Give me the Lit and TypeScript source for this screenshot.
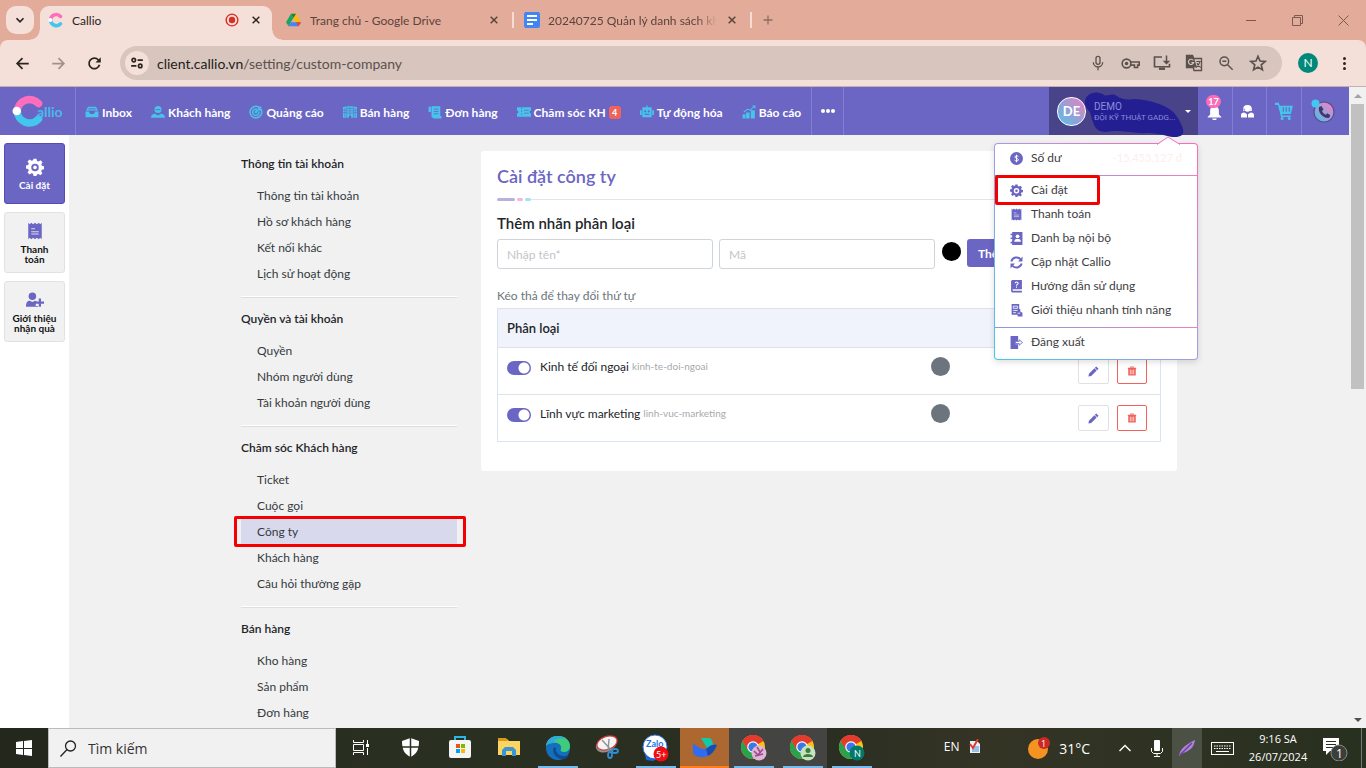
import { LitElement, html, svg, css, nothing } from 'lit';
import { customElement } from 'lit/decorators.js';
import { classMap } from 'lit/directives/class-map.js';

const icon = (body: unknown, size = 14, box = 24) =>
  html`<svg width=${size} height=${size} viewBox="0 0 ${box} ${box}" fill="currentColor" aria-hidden="true">${body}</svg>`;

const I = {
  chevron: svg`<path d="M6 9l6 6 6-6" fill="none" stroke="currentColor" stroke-width="3"/>`,
  close: svg`<path d="M4 4l16 16M20 4L4 20" fill="none" stroke="currentColor" stroke-width="3.6"/>`,
  plus: svg`<path d="M12 3v18M3 12h18" fill="none" stroke="currentColor" stroke-width="2.6"/>`,
  back: svg`<path d="M22 12H4M12 3.500L3.500 12l8.500 8.500" fill="none" stroke="currentColor" stroke-width="2.800"/>`,
  forward: svg`<path d="M2 12h18M12 3.500l8.500 8.500-8.500 8.500" fill="none" stroke="currentColor" stroke-width="2.800"/>`,
  reload: svg`<path d="M20 14a8.500 8.500 0 1 1-2-8l3 3" fill="none" stroke="currentColor" stroke-width="2.800"/><path d="M22 2v8.500h-8.500z"/>`,
  site: svg`<g fill="none" stroke="currentColor" stroke-width="2.800"><circle cx="6.500" cy="7" r="3"/><path d="M13 7h9M2 17h9"/><circle cx="17.500" cy="17" r="3"/></g>`,
  mic: svg`<g fill="none" stroke="currentColor" stroke-width="2"><rect x="9" y="2" width="6" height="12" rx="3"/><path d="M5 11a7 7 0 0 0 14 0M12 18v5"/></g>`,
  key: svg`<g fill="none" stroke="currentColor" stroke-width="2"><circle cx="7" cy="12" r="5.500"/><path d="M12 10h11v4h-2v3h-4v-3h-5"/></g><circle cx="7" cy="12" r="2.200"/>`,
  install: svg`<path d="M12 4H2v13h20v-4M8 20h8" fill="none" stroke="currentColor" stroke-width="2.200"/><path d="M17 2h2v7h4l-5 5-5-5h4zM8 18h8v3H8z"/>`,
  translate: svg`<path d="M2 2h8l1 4h11v16H12l-1-4H2z" fill="none" stroke="currentColor" stroke-width="1.800"/><path d="M2 2h9l5 16H2z"/><path d="M11 8.500a3.500 3.500 0 1 0 .5 3H8.500" fill="none" stroke="#d7c5be" stroke-width="1.500"/><path d="M15 10h6M18 9v1M20 10c-1 4-3 6-5 8M16 12c1 3 3 5 5 6" fill="none" stroke="currentColor" stroke-width="1.400"/>`,
  zoomOut: svg`<g fill="none" stroke="currentColor" stroke-width="2.200"><circle cx="9.500" cy="9.500" r="6.500"/><path d="M14.500 14.500L22 22M6.500 9.500h6"/></g>`,
  star: svg`<path d="M12 3l2.700 6.300 6.800.6-5.200 4.500 1.600 6.600-5.900-3.500L6.100 21l1.600-6.600L2.500 9.900l6.800-.6z" fill="none" stroke="currentColor" stroke-width="2.200"/>`,
  dots: svg`<circle cx="12" cy="4" r="2.400"/><circle cx="12" cy="12" r="2.400"/><circle cx="12" cy="20" r="2.400"/>`,
  rec: svg`<circle cx="12" cy="12" r="10" fill="none" stroke="currentColor" stroke-width="2.400"/><circle cx="12" cy="12" r="5.500"/>`,
  inbox: svg`<path d="M5 3h14l3 7H2zM1 11h6c0 3 2 4.500 5 4.500s5-1.500 5-4.500h6v10H1z"/><path d="M6 6h12M5 8.500h14" stroke="#6b65c4" stroke-width="1"/>`,
  customer: svg`<circle cx="12" cy="7.500" r="6"/><path d="M0 22c0-5 3-7 7-7l5 3 5-3c4 0 7 2 7 7z"/><path d="M8 8h8" stroke="#6b65c4" stroke-width="1.500"/>`,
  target: svg`<g fill="none" stroke="currentColor" stroke-width="2.600"><path d="M17 3.500a10 10 0 1 0 4 4.500"/><path d="M14 7.500a5.500 5.500 0 1 0 3 3.500"/></g><circle cx="12" cy="12" r="2.400"/><path d="M12 12l9-9" stroke="currentColor" stroke-width="2.400"/><path d="M18 2l1 4 4 1-3 3-4-1-1-4z"/>`,
  shop: svg`<path d="M0 4l6-2v20H0zM7 2h10v20h-3v-4h-4v4H7zM18 2l6 2v18h-6z"/><path d="M7 6h10M7 10h10M7 14h10M0 9h6M0 13h6M18 9h6M18 13h6" stroke="#6b65c4" stroke-width="1"/><path d="M12 3v14M3 5v16M21 5v16" stroke="#6b65c4"/>`,
  order: svg`<path d="M1 3h4v9H1zM6 2h15v17h2v4H10l-4-3z"/><path d="M10 7h8M10 11h8M10 15h8" stroke="#6b65c4" stroke-width="1.500"/>`,
  ticket: svg`<path d="M0 4h24v5l-3 3 3 3v5H0v-5l3-3-3-3z"/><path d="M8 4v3M8 9v3M8 14v3M12 9h8M12 14h8" stroke="#6b65c4" stroke-width="1.300"/>`,
  robot: svg`<path d="M11 1h2v3h7v17H4V4h7zM0 9h3v8H0zM21 9h3v8h-3z"/><g fill="#6b65c4"><circle cx="9" cy="11" r="1.800"/><circle cx="15" cy="11" r="1.800"/><path d="M8 15h8v2H8z"/></g>`,
  report: svg`<path d="M1 16h5v7H1zM7 13h6v10H7zM15 9h7v14h-7z"/><path d="M3 12l7-5 4 2 6-6" fill="none" stroke="currentColor" stroke-width="1.800"/><path d="M17 1h6v6z"/>`,
  gear: svg`<path fill-rule="evenodd" d="M10 1h4l.7 3 2 .8L19.400 3l2.700 2.800-1.700 2.600.8 2 2.800.6v4l-3 .6-.8 2 1.700 2.700-2.700 2.700-2.700-1.700-1.900.8L13.900 24h-3.800l-.7-2.900-2-.8L4.700 22 2 19.200l1.700-2.600-.8-2L0 14v-4l2.900-.6.8-2L2 4.700 4.800 2l2.600 1.700 2-.8zM12 7.500a5 5 0 1 0 0 10 5 5 0 0 0 0-10z"/><circle cx="12" cy="12.500" r="2.400"/>`,
  receipt: svg`<path d="M3 1l2 2 2-2 2.500 2L12 1l2.500 2L17 1l2 2 2-2v22l-2-2-2 2-2.500-2-2.500 2-2.500-2L7 23l-2-2-2 2z"/><path d="M7 9h5M7 13h10M7 16h10" stroke="#fff" stroke-width="1"/>`,
  userPlus: svg`<circle cx="8.500" cy="7" r="5"/><path d="M0 21c0-6 2-8 5-8l3.500 1.500L12 13l2 .5V16h-1v4h3v1zM17 10h3v4h4v3h-4v4h-3v-4h-4v-3h4z"/>`,
  money: svg`<circle cx="12" cy="12" r="12"/><path d="M15.500 8.500C14 6.500 8.800 7 9 9.500s6.500 2 6.500 4.800-5 3-7 .7M12 5v14" fill="none" stroke="#fff" stroke-width="1.800"/>`,
  contacts: svg`<path d="M4 0h19v24H4v-3H1v-3h3v-5H1v-3h3V6H1V3h3z"/><g fill="#fff"><circle cx="14" cy="8" r="3.500"/><path d="M8 18c0-4 2-5 6-5s6 1 6 5z"/></g>`,
  sync: svg`<g fill="none" stroke="currentColor" stroke-width="3.600"><path d="M2.500 10A10 10 0 0 1 20 6.500"/><path d="M21.500 14A10 10 0 0 1 4 17.500"/></g><path d="M23 1v9h-8zM1 23v-9h8z"/>`,
  book: svg`<path d="M4 0h18v17H5v3h17v3H4l-2-2V2z"/><path d="M9.500 6c0-3 5.500-3 5.500 0 0 2-3 2-3 4.500M12 12v2.200" fill="none" stroke="#fff" stroke-width="1.900"/>`,
  guide: svg`<path d="M3 0h14v9h2v5l4 2v7h-9v-3H3z"/><path d="M6 4h8v4H6zM6 12h8M6 16h5" fill="none" stroke="#fff" stroke-width="1.500"/><path d="M14 17h5" stroke="#fff" stroke-width="1.500"/>`,
  logout: svg`<path d="M1 0h14v9h-5v6h5v9H1z"/><path d="M10 10h7V7l6 5-6 5v-3h-7z" fill="#fff" stroke="currentColor" stroke-width="1.600"/>`,
  bell: svg`<path d="M12 0c1.500 0 2 1 2 2 4 1 5 4 5 8v5l4 4v1H1v-1l4-4v-5c0-4 1-7 5-8 0-1 .5-2 2-2zM8.500 21.500h7a3.500 3 0 0 1-7 0z"/>`,
  agent: svg`<circle cx="12" cy="7" r="5.500"/><path d="M4 7a8 7 0 0 1 16 0v4h-3V7M4 7v4h3M0 23v-4c0-3 2-5 6-5l5 3v6zM24 23v-4c0-3-2-5-6-5l-5 3v6z"/>`,
  cart: svg`<path d="M0 1h5l1.500 4H24l-3 11H9l1 2h11v2H8L4 4H0z"/><circle cx="9.500" cy="22" r="2"/><circle cx="19" cy="22" r="2"/><path d="M11 7v6M15 7v6M19 7v6" stroke="#6b65c4" stroke-width="1.500"/>`,
  pencil: svg`<path d="M18 1l5 5-3 3-5-5zM14 5l5 5L7 22l-6 1 1-6z"/>`,
  trash: svg`<path d="M8 4V1h8v3h6v3h-1v16H3V7H2V4h6zM10 4h4V3h-4z"/><path d="M8 9v11M12 9v11M16 9v11" stroke="#fff" stroke-width="1.600"/>`,
};

const callioMark = (s: number) => html`<svg width=${s} height=${s} viewBox="0 0 32 32" fill="none" aria-hidden="true">
  <path d="M25 9A11.500 11.500 0 0 0 5 16" stroke="#ff6ebd" stroke-width="7" stroke-linecap="round"/>
  <path d="M5 16a11.500 11.500 0 0 0 20 7.500" stroke="#43c7ee" stroke-width="7" stroke-linecap="round"/>
  <circle cx="4.500" cy="16" r="4" fill="#fff"/></svg>`;

const driveMark = html`<svg width="15" height="14" viewBox="0 0 30 27" aria-hidden="true">
  <path d="M10 1h10l10 17H20z" fill="#fbbc04"/><path d="M10 1L0 18l5 8 10-17z" fill="#1ea362"/><path d="M5 26h20l5-8H10z" fill="#4285f4"/><path d="M25 26l5-8H20z" fill="#ea4335"/><path d="M10 1h10l-5 8z" fill="#188038"/></svg>`;

const docsMark = html`<svg width="16" height="16" viewBox="0 0 16 16" aria-hidden="true"><rect width="16" height="16" rx="2" fill="#4285f4"/><path d="M3 4h10M3 8h10M3 12h6" stroke="#fff" stroke-width="2"/></svg>`;

const chromeMark = (badge: unknown) => html`<svg width="28" height="28" viewBox="0 0 28 28" aria-hidden="true">
  <circle cx="13" cy="13" r="12" fill="#fbc116"/><path d="M13 13L2.600 7A12 12 0 0 1 23.400 7z" fill="#e33b2e"/><path d="M2.600 7A12 12 0 0 0 13 25l4.500-9L8 15z" fill="#2aa24c"/><path d="M13 7h10.400A12 12 0 0 0 2.600 7l5.200 9z" fill="#e33b2e"/>
  <circle cx="13" cy="13" r="5.800" fill="#fff"/><circle cx="13" cy="13" r="4.600" fill="#3b78e7"/>${badge}</svg>`;

const navItems = [
  { label: 'Inbox', icon: I.inbox }, { label: 'Khách hàng', icon: I.customer }, { label: 'Quảng cáo', icon: I.target },
  { label: 'Bán hàng', icon: I.shop }, { label: 'Đơn hàng', icon: I.order }, { label: 'Chăm sóc KH', icon: I.ticket, badge: 4 },
  { label: 'Tự động hóa', icon: I.robot }, { label: 'Báo cáo', icon: I.report },
];

const sections = [
  { title: 'Thông tin tài khoản', items: ['Thông tin tài khoản', 'Hồ sơ khách hàng', 'Kết nối khác', 'Lịch sử hoạt động'] },
  { title: 'Quyền và tài khoản', items: ['Quyền', 'Nhóm người dùng', 'Tài khoản người dùng'] },
  { title: 'Chăm sóc Khách hàng', items: ['Ticket', 'Cuộc gọi', 'Công ty', 'Khách hàng', 'Câu hỏi thường gặp'] },
  { title: 'Bán hàng', items: ['Kho hàng', 'Sản phẩm', 'Đơn hàng'] },
];

@customElement('browser-chrome')
class BrowserChrome extends LitElement {
  static styles = css`
    :host { display: block; font-family: Lato, sans-serif; background: #e3ab9a; color: #2b2422; }
    button { border: 0; background: none; padding: 0; color: inherit; font: inherit; display: grid; place-items: center; }
    svg { display: block; flex: none; }
    .tabs { display: flex; height: 40px; align-items: center; padding-left: 6px; }
    .search { width: 28px; height: 28px; border-radius: 10px; background: #f5e0d9; margin-right: 4px; }
    .tab { width: 238px; height: 28px; box-sizing: border-box; display: flex; align-items: center; gap: 7px; padding: 0 12px 0 10px; font-size: 12px; color: #5b443d; }
    .tab + .tab { border-right: 2px solid #f3dcd4; padding-right: 10px; height: 16px; }
    .tab .mark { width: 17px; }
    .tab.active { position: relative; width: 232px; height: 34px; margin: 6px 4px 0 2px; padding: 0 8px; background: #f5e0d9; border-radius: 9px 9px 0 0; color: #2b2422; }
    .tab.active > * { margin-bottom: 6px; }
    .tab.active::before, .tab.active::after { content: ''; position: absolute; bottom: 0; width: 10px; height: 10px; }
    .tab.active::before { right: 100%; background: radial-gradient(circle at 0 0, transparent 9px, #f5e0d9 10px); }
    .tab.active::after { left: 100%; background: radial-gradient(circle at 100% 0, transparent 9px, #f5e0d9 10px); }
    .name { flex: 1; white-space: nowrap; overflow: hidden; }
    .fade { -webkit-mask-image: linear-gradient(90deg, #000 88%, transparent); mask-image: linear-gradient(90deg, #000 88%, transparent); }
    .rec { color: #d93025; margin-right: 2px; }
    .tab button { width: 16px; height: 16px; }
    .new { width: 32px; height: 28px; color: #8f6d62; }
    .win { margin-left: auto; display: flex; color: #7c5a50; }
    .win button { width: 46px; height: 40px; }
    .bar { display: flex; align-items: center; height: 46px; padding: 0 4px; background: #f5e0d9; border-radius: 8px 8px 0 0; border-bottom: 1px solid #c3b1ab; }
    .bar > button { width: 36px; height: 34px; }
    .dim { color: #a58f88; }
    .omni { flex: 1; min-width: 0; height: 34px; margin: 0 8px; box-sizing: border-box; border-radius: 17px; background: #d7c5be; display: flex; align-items: center; padding: 0 8px 0 5px; color: #5b514e; }
    .omni button { width: 32px; height: 32px; }
    .omni .site { width: 24px; height: 24px; border-radius: 12px; background: #f5e0d9; color: #2b2422; }
    .url { flex: 1; font-size: 14px; margin-left: 8px; }
    .url b { font-weight: 400; color: #231d1b; }
    .me { width: 20px; height: 20px; border-radius: 10px; background: #00897b; color: #fff; font-size: 12px; line-height: 20px; text-align: center; }
  `;
  render() {
    const close = html`<button aria-label="Đóng thẻ">${icon(I.close, 10)}</button>`;
    return html`
      <div class="tabs">
        <button class="search" aria-label="Tìm thẻ">${icon(I.chevron, 14)}</button>
        <div class="tab active"><span class="mark">${callioMark(16)}</span><span class="name">Callio</span><span class="rec">${icon(I.rec, 14)}</span>${close}</div>
        <div class="tab"><span class="mark">${driveMark}</span><span class="name">Trang chủ - Google Drive</span>${close}</div>
        <div class="tab"><span class="mark">${docsMark}</span><span class="name fade">20240725 Quản lý danh sách kh</span>${close}</div>
        <button class="new" aria-label="Thẻ mới">${icon(I.plus, 12)}</button>
        <div class="win">
          <button aria-label="Thu nhỏ"><svg width="10" height="10"><path d="M0 5.500h10" stroke="currentColor"/></svg></button>
          <button aria-label="Khôi phục"><svg width="11" height="11" fill="none" stroke="currentColor"><path d="M.5 2.500h8v8h-8zM2.500 2V.5h8v8H9"/></svg></button>
          <button aria-label="Đóng"><svg width="11" height="11" stroke="currentColor"><path d="M.5.5l10 10M10.500.5l-10 10"/></svg></button>
        </div>
      </div>
      <div class="bar">
        <button aria-label="Quay lại">${icon(I.back, 15)}</button>
        <button class="dim" aria-label="Tiến">${icon(I.forward, 15)}</button>
        <button aria-label="Tải lại">${icon(I.reload, 15)}</button>
        <div class="omni">
          <button class="site" aria-label="Thông tin trang">${icon(I.site, 14)}</button>
          <span class="url"><b>client.callio.vn</b>/setting/custom-company</span>
          <button aria-label="Micrô">${icon(I.mic, 16)}</button>
          <button aria-label="Mật khẩu">${icon(I.key, 19)}</button>
          <button aria-label="Cài đặt ứng dụng">${icon(I.install, 18)}</button>
          <button aria-label="Dịch">${icon(I.translate, 18)}</button>
          <button aria-label="Thu phóng">${icon(I.zoomOut, 16)}</button>
          <button aria-label="Đánh dấu">${icon(I.star, 18)}</button>
        </div>
        <button aria-label="Hồ sơ"><span class="me">N</span></button>
        <button aria-label="Trình đơn">${icon(I.dots, 15)}</button>
      </div>`;
  }
}

@customElement('callio-header')
class CallioHeader extends LitElement {
  static styles = css`
    :host { display: flex; height: 48px; background: #6b65c4; color: #fff; font: 700 12px Lato, sans-serif; position: relative; z-index: 2; }
    svg { display: block; flex: none; }
    a { color: inherit; text-decoration: none; }
    button { border: 0; background: none; padding: 0; color: inherit; font: inherit; display: grid; place-items: center; }
    .logo { width: 75px; box-sizing: border-box; padding-left: 12px; display: flex; align-items: center; color: #4ab9ea; font-size: 14px; }
    .logo svg { margin-right: -9px; }
    nav { display: flex; border-left: 1px solid #837ed6; border-right: 1px solid #837ed6; }
    nav a { display: flex; align-items: center; gap: 3px; padding: 2px 10px 0 9px; white-space: nowrap; }
    nav svg { color: #47c4ec; width: 14px; }
    .count { background: #f0625a; border-radius: 3px; width: 12px; line-height: 13px; font-size: 9px; text-align: center; }
    .more { width: 32px; border-right: 1px solid #837ed6; }
    .right { margin-left: auto; display: flex; }
    .user { position: relative; width: 149px; background: #494389; }
    .who { width: 100%; height: 48px; display: flex; align-items: center; gap: 8px; padding: 0 7px 0 8px; box-sizing: border-box; text-align: left; }
    .avatar { width: 27px; height: 27px; border: 1px solid #fff; border-radius: 14px; background: linear-gradient(225deg, #f07fc0, #8fa2d8 55%, #55c4ea); line-height: 27px; text-align: center; font-size: 13px; }
    .names { font: 10px/12px Roboto, sans-serif; color: #8f8bdc; white-space: nowrap; z-index: 1; flex: 1; padding-top: 2px; }
    .names small { display: block; font-size: 8px; line-height: 10px; }
    .scribble { position: absolute; left: 35px; top: 3px; }
    .caret { border: 3px solid transparent; border-top-color: #fff; border-bottom: 0; }
    .tool { width: 34px; border-left: 1px solid #837ed6; box-sizing: border-box; position: relative; padding-right: 5px; }
    .tool.wide { width: 48px; }
    .tool.cart { color: #47c4ec; width: 35px; padding: 0; }
    .tool.bell { border: 0; padding-right: 2px; }
    .bell svg { margin-top: 2px; }
    .bell span { position: absolute; top: 8px; left: 8px; width: 15px; line-height: 13px; border-radius: 7px; background: #fb6cb9; font-size: 9px; text-align: center; }
    .drop { position: absolute; right: 0; top: 56px; width: 204px; box-sizing: border-box; border: 1px solid transparent; border-radius: 4px;
      background: linear-gradient(#fff, #fff) padding-box, linear-gradient(225deg, #fb6cb9, #a99be0 50%, #43c7ee) border-box;
      box-shadow: 0 2px 6px #0002; color: #3d3d42; font: 400 12px/24px Lato, sans-serif; padding: 2px 0 5px; }
    .arrow { position: absolute; right: 16px; top: -8px; }
    .drop a { display: flex; align-items: center; gap: 8px; padding: 0 15px; position: relative; }
    .drop svg { color: #6b65c4; }
    .drop a > span { margin-left: auto; color: #fdeeee; font-size: 11px; }
    .drop hr { height: 1px; border: 0; margin: 5px 0 2px; background: linear-gradient(90deg, #7f9ede, #f07fc0); }
    .marked::after { content: ''; position: absolute; left: 0; top: -3px; width: 99px; height: 24px; border: 3px solid #f40000; border-radius: 2px; }
  `;
  render() {
    const row = (ic: unknown, label: string, extra: unknown = nothing, mark = false) =>
      html`<a href="#" class=${classMap({ marked: mark })}>${icon(ic, 13)}${label}${extra}</a>`;
    return html`
      <a class="logo" href="#" aria-label="Callio">${callioMark(34)}<span>allio</span></a>
      <nav>${navItems.map(n => html`<a href="#">${icon(n.icon, 14)}<span>${n.label}</span>${n.badge ? html`<span class="count">${n.badge}</span>` : nothing}</a>`)}</nav>
      <button class="more" aria-label="Thêm mục"><svg width="14" height="4" fill="#fff"><circle cx="2" cy="2" r="2"/><circle cx="7" cy="2" r="2"/><circle cx="12" cy="2" r="2"/></svg></button>
      <div class="right">
        <div class="user">
          <button class="who">
            <span class="avatar">DE</span>
            <svg class="scribble" width="102" height="48" viewBox="0 0 102 48"><path d="M1 11C2 4 10 0 19 4c3 4 8-2 14 2 3 3 10 4 18 3 14 1 33 6 40 15 5 7 11 17 7 21-8 6-21-3-34-2-14 1-30-4-42-1C9 42 9 31 6 22 2 18 0 15 1 11z" fill="#231f93"/></svg>
            <span class="names">DEMO<small>ĐỘI KỸ THUẬT GADG...</small></span>
            <span class="caret"></span>
          </button>
          <div class="drop">
            <svg class="arrow" width="24" height="9" viewBox="0 0 24 9"><path d="M0 9L11 1l13 8z" fill="#fff"/><path d="M0 8.500L11 1l12 7.500" fill="none" stroke="#fb6cb9"/></svg>
            ${row(I.money, 'Số dư', html`<span>-15,453,127 đ</span>`)}
            <hr>
            ${row(I.gear, 'Cài đặt', nothing, true)}
            ${row(I.receipt, 'Thanh toán')}
            ${row(I.contacts, 'Danh bạ nội bộ')}
            ${row(I.sync, 'Cập nhật Callio')}
            ${row(I.book, 'Hướng dẫn sử dụng')}
            ${row(I.guide, 'Giới thiệu nhanh tính năng')}
            <hr>
            ${row(I.logout, 'Đăng xuất')}
          </div>
        </div>
        <button class="tool bell" aria-label="Thông báo">${icon(I.bell, 15)}<span>17</span></button>
        <button class="tool" aria-label="Tổng đài viên">${icon(I.agent, 13)}</button>
        <button class="tool cart" aria-label="Giỏ hàng">${icon(I.cart, 18)}</button>
        <button class="tool wide" aria-label="Gọi điện">
          <svg width="24" height="24" viewBox="0 0 24 24"><defs><linearGradient id="g" x1="1" y1="0" x2="0" y2="1"><stop offset=".15" stop-color="#e884c8"/><stop offset=".85" stop-color="#5bb9e4"/></linearGradient></defs><circle cx="13" cy="13" r="10" fill="url(#g)" stroke="#574f8f" stroke-width="1.200"/><path d="M8 8l2.500-1 2 3.500-1.500 1.500c.7 1.800 2 3 3.800 3.700l1.500-1.500 3 2-1 2.500c-5 1.500-12-5-10.300-10.700z" fill="#3f3770"/><circle cx="4.500" cy="4.500" r="4" fill="#43c7ee"/></svg>
        </button>
      </div>`;
  }
}

@customElement('settings-page')
class SettingsPage extends LitElement {
  static styles = css`
    :host { display: flex; min-height: 0; flex: 1; background: #f1f1f1; color: #212529; font: 12px Lato, sans-serif; overflow: hidden; }
    svg { display: block; }
    a { color: inherit; text-decoration: none; }
    .rail { width: 69px; box-sizing: border-box; flex: none; background: #fff; padding: 8px 4px; display: flex; flex-direction: column; gap: 8px; }
    .rail a { height: 61px; box-sizing: border-box; border: 1px solid #e2e2e2; border-radius: 3px; background: #f1f1f1; display: flex; flex-direction: column; align-items: center; justify-content: center; gap: 4px; font-weight: 700; font-size: 10px; line-height: 10px; text-align: center; color: #111; }
    .rail svg { color: #6b65c4; }
    .rail .on { background: #6b65c4; border-color: #544db4; color: #fff; }
    .rail .on svg { color: #fff; }
    .wrap { flex: 1; min-width: 0; padding: 16px; }
    .cols { display: flex; align-items: flex-start; gap: 24px; max-width: 936px; margin: 0 auto; }
    .menu { width: 216px; flex: none; line-height: 26px; }
    .menu h2 { margin: 0 0 6px; font-size: 12px; font-weight: 600; }
    .menu section { border-bottom: 1px solid #dedede; box-shadow: inset 0 -1px #fff; padding-bottom: 10px; margin-bottom: 8px; }
    .menu a { display: block; padding-left: 16px; color: #343a40; position: relative; }
    .menu .on { background: #d9d9ee; }
    .menu .on::after { content: ''; position: absolute; inset: -3px -9px -2px -7px; border: 3px solid #f40000; border-radius: 2px; }
    .panel { flex: 1; min-width: 0; background: #fff; border-radius: 3px; padding: 13px 16px 29px; }
    h1 { margin: 0; font-size: 18px; line-height: 24px; font-weight: 600; color: #6b65c4; }
    .rule { margin-top: 10px; height: 3px; display: flex; align-items: center; gap: 2px; }
    .rule i { height: 3px; width: 6px; border-radius: 2px; background: #f9b3dc; }
    .rule i:first-child { width: 18px; background: #b5b2e2; }
    .rule .c { background: #9fe3f5; margin-right: -2px; }
    .rule b { flex: 1; height: 1px; background: #e2e4e8; }
    h3 { margin: 11px 0 5px; font-size: 15px; line-height: 22px; font-weight: 600; }
    form { display: flex; gap: 6px; align-items: flex-start; }
    form input:not([type=color]) { flex: 0 1 216px; min-width: 0; height: 30px; box-sizing: border-box; border: 1px solid #ced4da; border-radius: 3px; padding: 0 9px; font: 12px Lato, sans-serif; }
    input::placeholder { color: #c4c4c8; }
    input[type=color] { appearance: none; width: 19px; height: 19px; padding: 0; border: 0; border-radius: 10px; background: #000; margin: 3px 0 0 1px; overflow: hidden; }
    input[type=color]::-webkit-color-swatch-wrapper { padding: 0; }
    input[type=color]::-webkit-color-swatch { border: 0; }
    .add { height: 28px; border: 0; border-radius: 3px; background: #6b65c4; color: #fff; font: 700 12px Lato, sans-serif; padding: 0 11px; }
    .hint { margin: 19px 0 4px; line-height: 16px; color: #6c757d; }
    table { width: 100%; border-collapse: collapse; border: 1px solid #dbe5f2; }
    tr { border-top: 1px solid #dee2e6; }
    th { text-align: left; background: #f0f3fb; font-size: 13px; font-weight: 600; line-height: 20px; padding: 9px; }
    td { vertical-align: top; padding: 9px; line-height: 19px; }
    .name { display: flex; align-items: center; gap: 3px; }
    .name input { appearance: none; margin: 2px 6px 0 0; width: 24px; height: 14px; border-radius: 7px; background: radial-gradient(circle at 17px 7px, #fff 5px, #6b65c4 6px); }
    small { font-size: 10px; color: #a7a9ac; }
    .dot { width: 19px; height: 19px; border-radius: 10px; background: #6c757d; }
    .acts { display: flex; gap: 8px; justify-content: flex-end; padding: 1px 4px 1px 0; }
    .acts button { width: 31px; height: 26px; border: 1px solid #dee2e6; border-radius: 2px; background: #fff; color: #6b65c4; padding: 0; display: grid; place-items: center; }
    .acts .del { border-color: #f0625a; color: #f0625a; width: 30px; }
  `;
  render() {
    const rows = [['Kinh tế đối ngoại', 'kinh-te-doi-ngoai'], ['Lĩnh vực marketing', 'linh-vuc-marketing']];
    return html`
      <aside class="rail">
        <a href="#" class="on">${icon(I.gear, 18)}<span>Cài đặt</span></a>
        <a href="#">${icon(I.receipt, 18)}<span>Thanh<br>toán</span></a>
        <a href="#">${icon(I.userPlus, 18)}<span>Giới thiệu<br>nhận quà</span></a>
      </aside>
      <div class="wrap"><div class="cols">
        <nav class="menu">${sections.map(s => html`<section><h2>${s.title}</h2>
          ${s.items.map(t => html`<a href="#" class=${classMap({ on: t === 'Công ty' })}>${t}</a>`)}</section>`)}</nav>
        <main class="panel">
          <h1>Cài đặt công ty</h1>
          <div class="rule"><i></i><i></i><i class="c"></i><b></b></div>
          <h3>Thêm nhãn phân loại</h3>
          <form @submit=${(e: Event) => e.preventDefault()}>
            <input aria-label="Nhập tên" placeholder="Nhập tên*">
            <input aria-label="Mã" placeholder="Mã">
            <input type="color" aria-label="Màu" value="#000000">
            <button class="add">Thêm</button>
          </form>
          <p class="hint">Kéo thả để thay đổi thứ tự</p>
          <table>
            <colgroup><col style="width:64%"><col><col></colgroup>
            <thead><tr><th colspan="3">Phân loại</th></tr></thead>
            <tbody>${rows.map(([n, c]) => html`<tr>
              <td><label class="name"><input type="checkbox" checked><span>${n}</span><small>${c}</small></label></td>
              <td><div class="dot"></div></td>
              <td><div class="acts"><button aria-label="Sửa">${icon(I.pencil, 11)}</button><button class="del" aria-label="Xóa">${icon(I.trash, 10)}</button></div></td>
            </tr>`)}</tbody>
          </table>
        </main>
      </div></div>`;
  }
}

@customElement('task-bar')
class TaskBar extends LitElement {
  static styles = css`
    :host { display: flex; height: 40px; background: linear-gradient(90deg, #24271c, #293021 30%, #2a2e22 60%, #343425 72%, #28301f); color: #fff; font-family: 'Open Sans', sans-serif; }
    svg { display: block; }
    button { border: 0; background: none; padding: 0; color: inherit; font: inherit; display: grid; place-items: center; }
    .start { width: 48px; }
    .find { width: 288px; box-sizing: border-box; background: #f1f1f1; border: 1px solid #bbb; display: flex; align-items: center; gap: 11px; padding-left: 11px; color: #222; }
    .find input { border: 0; background: none; font: 14px 'Open Sans', sans-serif; padding: 0; width: 200px; }
    .find input::placeholder { color: #333; }
    .app { width: 49px; border-bottom: 2px solid transparent; box-sizing: border-box; background-clip: padding-box; }
    .run { border: 0; background: linear-gradient(#76b9ed, #76b9ed) center bottom / 40px 2px no-repeat; }
    .alt { background-color: #444543; }
    .hot { border: 0; background: linear-gradient(#ff7b1c, #ff7b1c) bottom / 100% 2px no-repeat #ad6832; }
    .apps { display: flex; padding-left: 1px; }
    .tray { margin-left: auto; display: flex; align-items: center; padding-right: 4px; }
    .tray button { height: 40px; }
    .tray .en { font-size: 12px; width: 31px; padding-bottom: 4px; }
    .tray .ime { width: 15px; padding-bottom: 4px; }
    .weather { display: flex; align-items: center; gap: 9px; margin: 0 18px 0 46px; font-size: 14px; }
    .w { width: 34px; }
    .n { width: 30px; }
    .pen { background: #4b5145; }
    .k { width: 40px; }
    .clock { width: 72px; font-size: 11px; line-height: 18px; text-align: center; }
    .tray .note { width: 48px; border-right: 1px solid #777; padding-right: 6px; }
  `;
  render() {
    const apps: [string, string, unknown][] = [
      ['Task View', 'app', html`<svg width="17" height="15" fill="none" stroke="#fff"><path d="M.5 0v2.500h10V0M.5 4.500h10v6H.5zM.5 15v-2.500h10V15M14.500 0v4M14.500 8v7"/><path d="M13 4h3v3h-3z" fill="#fff" stroke="none"/></svg>`],
      ['Bảo mật', 'app', html`<svg width="17" height="19" viewBox="0 0 17 19"><path d="M8.500 0l8.500 3c0 8-2 13-8.500 16C2 16 0 11 0 3z" fill="#fff"/><path d="M8.500 0v19M0 9h17" stroke="#2a3022" stroke-width="1.500"/></svg>`],
      ['Store', 'app', html`<svg width="24" height="24" viewBox="0 0 24 24"><path d="M7 6V2h10v4" fill="none" stroke="#2db5e8" stroke-width="2"/><rect x="1" y="5" width="22" height="18" rx="2" fill="#f5f5f5"/><path d="M8 9h4v4H8z" fill="#f25022"/><path d="M13 9h4v4h-4z" fill="#7fba00"/><path d="M8 14h4v4H8z" fill="#00a4ef"/><path d="M13 14h4v4h-4z" fill="#ffb900"/></svg>`],
      ['Thư mục', 'app', html`<svg width="22" height="20" viewBox="0 0 22 20"><path d="M0 2h9l2 2h11v14H0z" fill="#fcd462"/><path d="M0 1h8l2 3H0z" fill="#d99a1c"/><path d="M4 19v-6l3-3h8l3 3v6h-4v-5H8v5z" fill="#3996d6"/></svg>`],
      ['Edge', 'app run', html`<svg width="26" height="26" viewBox="0 0 26 26"><circle cx="13" cy="13" r="12" fill="#1470bd"/><path d="M1 11C2 4 7 1 13 1c8 0 12 5 12 10 0 4-3 6-6 6-3 0-4-1-3-3 1-5-4-7-8-6-3 0-6 1-7 3z" fill="#3fcb7e"/><path d="M1 11C2 4 7 1 13 1c3 0 6 1 8 3-6-2-11 0-13 4-3 0-6 1-7 3z" fill="#2fa9de"/><path d="M9 12c-3 5 2 12 8 12 3 0 5-1 7-4-7 3-14-1-13-7z" fill="#0d4d93"/></svg>`],
      ['Cắt hình', 'app', html`<svg width="26" height="26" viewBox="0 0 26 26"><ellipse cx="12" cy="11" rx="10.500" ry="7" transform="rotate(-20 12 11)" fill="#909396"/><ellipse cx="13" cy="9" rx="10.500" ry="6.500" transform="rotate(-20 13 9)" fill="#f3f4f5" stroke="#d33b35" stroke-width="1.200"/><path d="M8 6l10 11M15 5l-1 12" stroke="#8d9399" stroke-width="1.400"/><g fill="none" stroke="#2f8fd0" stroke-width="1.800"><ellipse cx="16" cy="21" rx="2" ry="3"/><ellipse cx="21" cy="17" rx="3" ry="2"/></g></svg>`],
      ['Zalo', 'app run', html`<svg width="28" height="28" viewBox="0 0 28 28"><circle cx="13" cy="13" r="12" fill="#fff" stroke="#2c7be5"/><path d="M3 20c3 4 8 6 14 4l-6 3-7-1z" fill="#1b66d9"/><text x="4" y="13" font-size="9" font-weight="700" fill="#2272e6" font-family="Lato">Zalo</text><circle cx="19" cy="20" r="7.500" fill="#f30d12"/><text x="14" y="24" font-size="9" fill="#fff" font-family="Lato">5+</text></svg>`],
      ['Ghi chú', 'app hot', html`<svg width="26" height="22" viewBox="0 0 26 22"><path d="M9 1h9c2 2 3 4 3 7l-6 3z" fill="#13c9a9"/><path d="M1 6c6 6 12 8 17 4 2-2 5-3 7-2-4 9-10 13-17 12-4 0-7-3-7-5z" fill="#2f6cf2"/><path d="M14 12c4-4 7-5 11-4-2 5-5 9-9 11z" fill="#174cb2"/></svg>`],
      ['Chrome 1', 'app run alt', chromeMark(svg`<circle cx="19" cy="19" r="7.500" fill="#e0b5d6"/><path d="M14 17l4 4 5-6M15 22l8-2M17 13l3 5" stroke="#9c4b8c" stroke-width="1.600" fill="none"/>`)],
      ['Chrome 2', 'app run alt', chromeMark(svg`<circle cx="19" cy="19" r="7.500" fill="#c5e3bf"/><circle cx="19" cy="16.500" r="2.500" fill="#3d7d3a"/><path d="M14 23c0-4 10-4 10 0z" fill="#3d7d3a"/>`)],
      ['Chrome 3', 'app run', chromeMark(svg`<circle cx="19" cy="19" r="7.500" fill="#00796b"/><text x="16" y="22.500" font-size="9" fill="#fff" font-family="Lato">N</text>`)],
    ];
    return html`
      <button class="start" aria-label="Bắt đầu"><svg width="16" height="16" fill="#fff"><path d="M0 2l7-1v7H0zM8 1l8-1v8H8zM0 9h7v6l-7-1zM8 9h8v7l-8-1z"/></svg></button>
      <label class="find"><svg width="17" height="17" fill="none" stroke="#222" stroke-width="1.300"><circle cx="10.500" cy="6" r="5"/><path d="M7 9.500L.5 16.500"/></svg><input placeholder="Tìm kiếm" aria-label="Tìm kiếm"></label>
      <div class="apps">${apps.map(([l, c, s]) => html`<button class=${c} aria-label=${l}>${s}</button>`)}</div>
      <div class="tray">
        <button class="en">EN</button>
        <button class="ime" aria-label="Bộ gõ"><svg width="12" height="14"><path d="M1 2h7l3 3v9H1z" fill="#e5f1fb"/><path d="M3 8h7M3 10h7M3 12h7" stroke="#4b90cc"/><path d="M1 5l3 4 5-9" fill="none" stroke="#e23a26" stroke-width="2"/></svg></button>
        <div class="weather"><svg width="22" height="22"><circle cx="10" cy="12" r="10" fill="#f59322"/><circle cx="16" cy="6" r="6" fill="#c92b22"/><text x="13" y="10" font-size="9" fill="#fff">1</text></svg><span>31°C</span></div>
        <button class="w" aria-label="Biểu tượng ẩn"><svg width="12" height="8" fill="none" stroke="#fff" stroke-width="1.400"><path d="M.5 7L6 1.500 11.500 7"/></svg></button>
        <button class="n" aria-label="Micrô"><svg width="12" height="17"><rect x="3" width="6" height="11" rx="1" fill="#fff"/><path d="M.5 8v3.500l2 2h7l2-2V8M6 13v4M3 16.500h6" fill="none" stroke="#fff"/></svg></button>
        <button class="n pen" aria-label="Bút"><svg width="18" height="18"><path d="M1 17c1-7 6-11 16-16-1 7-5 11-12 13z" fill="#b083dd"/><path d="M2 16L14 4" stroke="#6c3f9d" stroke-width="1.500"/></svg></button>
        <button class="k" aria-label="Bàn phím"><svg width="23" height="13" fill="none" stroke="#fff"><rect x=".5" y=".5" width="22" height="12"/><path d="M3 4h17M3 6.500h17" stroke-dasharray="1.500 1"/><path d="M5 9.500h13"/></svg></button>
        <div class="clock">9:16 SA<br>26/07/2024</div>
        <button class="note" aria-label="Thông báo"><svg width="26" height="26" viewBox="0 0 26 26"><path d="M1 3h16v13h-9l-4 4v-4H1z" fill="#fff"/><path d="M4 6.500h10M4 9.500h10M4 12.500h7" stroke="#2a3021"/><circle cx="17" cy="18" r="8" fill="#3c3f39" stroke="#888"/><text x="14" y="22.500" font-size="12" fill="#fff" font-family="Open Sans">1</text></svg></button>
      </div>`;
  }
}

@customElement('app-root')
class AppRoot extends LitElement {
  static styles = css`
    :host { display: flex; flex-direction: column; height: 100vh; overflow: hidden; }
    .view { flex: 1; min-height: 0; display: flex; }
    .page { flex: 1; min-width: 0; display: flex; flex-direction: column; }
    .scroll { width: 17px; background: #f1f1f1; display: grid; grid-template-rows: 17px 1fr 17px; justify-items: center; align-items: center; color: #a3a3a3; }
    .track { height: 100%; width: 13px; }
    .thumb { height: 47%; background: #c1c1c1; }
    .up, .down { border: 4px solid transparent; }
    .up { border-bottom-color: currentColor; border-top: 0; }
    .down { border-top-color: #505050; border-bottom: 0; }
  `;
  render() {
    return html`
      <browser-chrome></browser-chrome>
      <div class="view">
        <div class="page"><callio-header></callio-header><settings-page></settings-page></div>
        <div class="scroll"><span class="up"></span><div class="track"><div class="thumb"></div></div><span class="down"></span></div>
      </div>
      <task-bar></task-bar>`;
  }
}
